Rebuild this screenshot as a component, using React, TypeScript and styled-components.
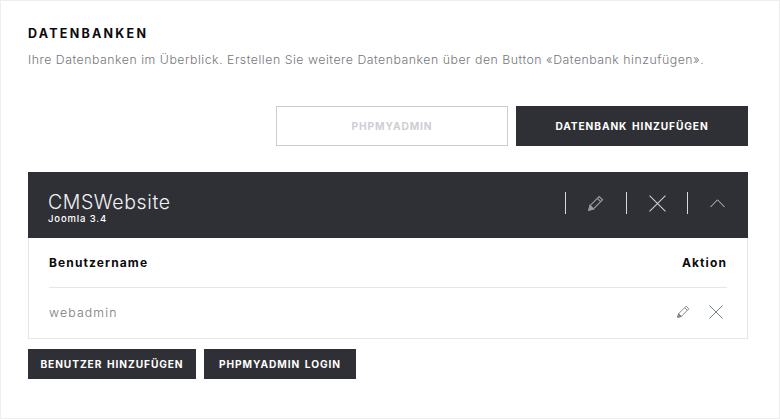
import React from "react";
import styled, { createGlobalStyle } from "styled-components";

const Global = createGlobalStyle`
  html, body { margin: 0; padding: 0; background: #fff; }
  body { font-family: Inter, "Liberation Sans", sans-serif; }
`;

const Page = styled.main`
  box-sizing: border-box;
  width: 780px;
  height: 419px;
  border: 1px solid #eeeeee;
  padding: 26px 31px 0 27px;
  overflow: hidden;
`;

const Title = styled.h1`
  margin: 0;
  font-size: 12.5px;
  line-height: 14px;
  font-weight: 700;
  letter-spacing: 2.25px;
  color: #0b0b0e;
`;

const Intro = styled.p`
  margin: 11px 0 0;
  font-size: 12.3px;
  line-height: 16px;
  font-weight: 300;
  letter-spacing: 0.52px;
  color: #77777c;
  white-space: nowrap;
`;

const Actions = styled.div`
  display: flex;
  justify-content: flex-end;
  gap: 8px;
  margin-top: 38px;
`;

const Button = styled.button<{ $outline?: boolean; $w: number; $h: number }>`
  box-sizing: border-box;
  width: ${(p) => p.$w}px;
  height: ${(p) => p.$h}px;
  padding: 0;
  border: ${(p) => (p.$outline ? "1px solid #cccccc" : "none")};
  background: ${(p) => (p.$outline ? "#fff" : "#2f3035")};
  color: ${(p) => (p.$outline ? "#cdced3" : "#fff")};
  font-family: inherit;
  font-size: 10.2px;
  font-weight: 700;
  letter-spacing: 0.9px;
  word-spacing: 1.5px;
  text-transform: uppercase;
`;

const Panel = styled.section`
  margin-top: 26px;
`;

const PanelHead = styled.header`
  display: flex;
  align-items: center;
  justify-content: space-between;
  height: 66px;
  padding: 0 23px 0 20px;
  background: #2f3035;
`;

const NameBlock = styled.div`
  display: flex;
  flex-direction: column;
  gap: 3px;
  padding-top: 7px;
`;

const Name = styled.span`
  font-size: 19.5px;
  line-height: 18px;
  font-weight: 300;
  letter-spacing: 0.6px;
  color: #f2f3f5;
`;

const Version = styled.span`
  font-size: 9.5px;
  line-height: 10px;
  font-weight: 500;
  letter-spacing: 0.85px;
  color: #fff;
`;

const HeadTools = styled.div`
  display: flex;
  align-items: center;
  padding-bottom: 4px;
`;

const Divider = styled.span`
  display: block;
  width: 1px;
  height: 22px;
  background: #d8d8da;
`;

const ToolSlot = styled.span`
  display: flex;
  align-items: center;
  justify-content: center;
  width: 60px;
  &:last-child { width: 37px; justify-content: flex-end; }
`;

const PanelBody = styled.div`
  box-sizing: border-box;
  height: 101px;
  padding: 0 20px;
  border: 1px solid #e6e6e6;
  border-top: none;
`;

const HeadRow = styled.div`
  display: flex;
  align-items: center;
  justify-content: space-between;
  height: 49px;
  border-bottom: 1px solid #e6e6e6;
  font-size: 12px;
  font-weight: 700;
  letter-spacing: 1.12px;
  color: #0b0b0e;
`;

const UserRow = styled.div`
  display: flex;
  align-items: center;
  justify-content: space-between;
  box-sizing: border-box;
  height: 50px;
  padding-bottom: 2px;
  font-size: 12.3px;
  font-weight: 300;
  letter-spacing: 1.15px;
  color: #77777c;
`;

const RowTools = styled.div`
  display: flex;
  align-items: center;
  gap: 19px;
  padding: 0 4px 1px 0;
`;

const Footer = styled.div`
  display: flex;
  gap: 8px;
  margin-top: 10px;
`;

const Glyph = styled.svg`
  display: block;
  flex: none;
  fill: none;
`;

const Pencil = ({ size, color }: { size: number; color: string }) => (
  <Glyph width={size} height={size} viewBox="0 0 16 16" stroke={color} strokeWidth={1.2}>
    <path d="M0.9 15.1 L2 10.7 L11.2 1.5 L14.5 4.8 L5.3 14 Z" />
    <path d="M2 10.7 L5.3 14" />
    <path d="M9.4 3.3 L12.7 6.6" />
    <path d="M0.9 15.1 L2 10.7 L5.3 14 Z" fill={color} />
  </Glyph>
);

const Cross = ({ size, color }: { size: number; color: string }) => (
  <Glyph width={size} height={size} viewBox="0 0 16 16" stroke={color} strokeWidth={1}>
    <path d="M0.5 0.5 L15.5 15.5 M15.5 0.5 L0.5 15.5" />
  </Glyph>
);

const Chevron = () => (
  <Glyph width={15} height={9} viewBox="0 0 15 9" stroke="#c9c9cc" strokeWidth={1}>
    <path d="M0.5 8 L7.5 0.8 L14.5 8" />
  </Glyph>
);

export default function App() {
  return (
    <Page>
      <Global />
      <Title>DATENBANKEN</Title>
      <Intro>Ihre Datenbanken im Überblick. Erstellen Sie weitere Datenbanken über den Button «Datenbank hinzufügen».</Intro>
      <Actions>
        <Button $outline $w={232} $h={40}>phpMyAdmin</Button>
        <Button $w={232} $h={40}>Datenbank hinzufügen</Button>
      </Actions>
      <Panel>
        <PanelHead>
          <NameBlock>
            <Name>CMSWebsite</Name>
            <Version>Joomla 3.4</Version>
          </NameBlock>
          <HeadTools>
            <Divider />
            <ToolSlot><Pencil size={16} color="#9a9a9e" /></ToolSlot>
            <Divider />
            <ToolSlot><Cross size={17} color="#d0d0d3" /></ToolSlot>
            <Divider />
            <ToolSlot><Chevron /></ToolSlot>
          </HeadTools>
        </PanelHead>
        <PanelBody>
          <HeadRow>
            <span>Benutzername</span>
            <span>Aktion</span>
          </HeadRow>
          <UserRow>
            <span>webadmin</span>
            <RowTools>
              <Pencil size={13} color="#85858a" />
              <Cross size={14} color="#5f7078" />
            </RowTools>
          </UserRow>
        </PanelBody>
      </Panel>
      <Footer>
        <Button $w={168} $h={30}>Benutzer hinzufügen</Button>
        <Button $w={152} $h={30}>phpMyAdmin Login</Button>
      </Footer>
    </Page>
  );
}
